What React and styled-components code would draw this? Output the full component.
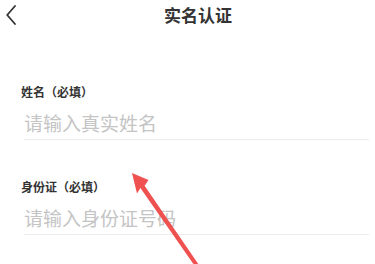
import React from "react";
import styled, { createGlobalStyle } from "styled-components";

const Global = createGlobalStyle`
  html, body { margin: 0; padding: 0; background: #fff; }
  body { font-family: "Noto Sans CJK SC", "Noto Sans", sans-serif; }
  * { box-sizing: border-box; }
`;

const Page = styled.div`
  position: relative;
  width: 375px;
  height: 264px;
  overflow: hidden;
  background: #fff;
`;

const Header = styled.header`
  height: 30px;
  display: flex;
  align-items: center;
  padding-left: 6px;
`;

const BackButton = styled.button`
  width: 10px;
  height: 20px;
  padding: 0;
  border: none;
  background: none;
  display: flex;
  align-items: center;
  justify-content: center;
`;

const Title = styled.h1`
  flex: 1;
  margin: 0;
  padding-left: 5px;
  text-align: center;
  font-size: 17px;
  line-height: 20px;
  font-weight: 700;
  color: #333;
  letter-spacing: 0;
`;

const Form = styled.form`
  display: flex;
  flex-direction: column;
  gap: 41px;
  padding: 56px 6px 0 21px;
`;

const Field = styled.div`
  display: flex;
  flex-direction: column;
  gap: 12px;
`;

const Label = styled.label`
  font-size: 12px;
  line-height: 12px;
  font-weight: 700;
  color: #333;
`;

const Input = styled.input`
  margin-left: 3px;
  height: 30px;
  padding: 0 0 4px 0;
  border: none;
  border-bottom: 1px solid #ececec;
  outline: none;
  background: transparent;
  font-family: "Noto Sans CJK SC", "Noto Sans", sans-serif;
  font-size: 19px;
  color: #333;
  &::placeholder { color: #c4c4c4; }
`;

const Arrow = styled.svg`
  position: absolute;
  left: 0;
  top: 0;
  pointer-events: none;
`;

export default function App() {
  return (
    <Page>
      <Global />
      <Header>
        <BackButton type="button" aria-label="返回">
          <svg width="10" height="20" viewBox="0 0 10 20">
            <polyline points="9,1 1.2,10 9,19" fill="none" stroke="#333" strokeWidth="1.8" strokeLinecap="round" strokeLinejoin="round" />
          </svg>
        </BackButton>
        <Title>实名认证</Title>
      </Header>
      <Form>
        <Field>
          <Label>姓名（必填）</Label>
          <Input placeholder="请输入真实姓名" />
        </Field>
        <Field>
          <Label>身份证（必填）</Label>
          <Input placeholder="请输入身份证号码" />
        </Field>
      </Form>
      <Arrow width="375" height="264" viewBox="0 0 375 264">
        <polygon
          points="132,173 148.5,180 144.6,185.7 201.6,268.8 198.4,271.2 140.4,187.9 137,193.5"
          fill="#ef5050"
        />
      </Arrow>
    </Page>
  );
}
